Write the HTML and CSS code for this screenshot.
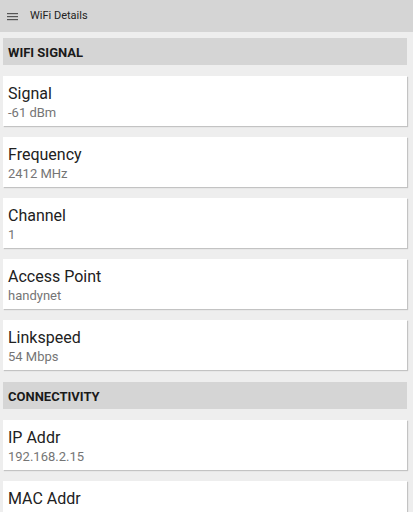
FILE: index.html
```html
<!DOCTYPE html>
<html lang="en">
<head>
<meta charset="UTF-8">
<meta name="viewport" content="width=device-width, initial-scale=1.0">
<title>WiFi Details</title>
<link rel="stylesheet" href="styles.css">
</head>
<body>
<div class="toolbar">
    <svg class="menu-icon" width="11" height="8" viewBox="0 0 11 8">
        <rect x="0" y="0" width="11" height="1.2" fill="#555"/>
        <rect x="0" y="3" width="11" height="1.2" fill="#555"/>
        <rect x="0" y="6" width="11" height="1.2" fill="#555"/>
    </svg>
    <span class="toolbar-title">WiFi Details</span>
</div>

<div class="content">
    <div class="section-header">WIFI SIGNAL</div>
    <div class="card">
        <div class="card-title">Signal</div>
        <div class="card-value">-61 dBm</div>
    </div>
    <div class="card">
        <div class="card-title">Frequency</div>
        <div class="card-value">2412 MHz</div>
    </div>
    <div class="card">
        <div class="card-title">Channel</div>
        <div class="card-value">1</div>
    </div>
    <div class="card">
        <div class="card-title">Access Point</div>
        <div class="card-value">handynet</div>
    </div>
    <div class="card">
        <div class="card-title">Linkspeed</div>
        <div class="card-value">54 Mbps</div>
    </div>

    <div class="section-header">CONNECTIVITY</div>
    <div class="card">
        <div class="card-title">IP Addr</div>
        <div class="card-value">192.168.2.15</div>
    </div>
    <div class="card">
        <div class="card-title">MAC Addr</div>
    </div>
</div>
</body>
</html>
```

FILE: styles.css
```css
body {
    font-family: Roboto, "Liberation Sans", sans-serif;
    background-color: #eeeeee;
    margin: 0;
    padding: 0;
    color: #212121;
    height: 512px;
    overflow: hidden;
}

.toolbar {
    height: 32px;
    background-color: #d5d5d5;
    display: flex;
    align-items: center;
    padding-left: 7px;
}

.menu-icon {
    display: block;
    margin-top: 1px;
}

.toolbar-title {
    font-size: 11px;
    line-height: 32px;
    margin-left: 12px;
    color: #222;
}

.content {
    padding: 0 6px 0 3px;
}

.section-header {
    margin-top: 6px;
    height: 26px;
    padding: 1px 0 0 5px;
    line-height: 27px;
    background-color: #d5d5d5;
    font-size: 13px;
    font-weight: bold;
    color: #1a1a1a;
}

.card + .section-header {
    margin-top: 12px;
}

.card {
    margin-top: 11px;
    height: 42px;
    padding: 8px 0 0 5px;
    background-color: #fff;
    box-shadow: 1px 1px 1px rgba(0, 0, 0, 0.18);
}

.card-title {
    font-size: 16px;
    line-height: 19px;
    color: #212121;
}

.card-value {
    margin-top: 1px;
    font-size: 13px;
    line-height: 17px;
    color: #757575;
}
```
